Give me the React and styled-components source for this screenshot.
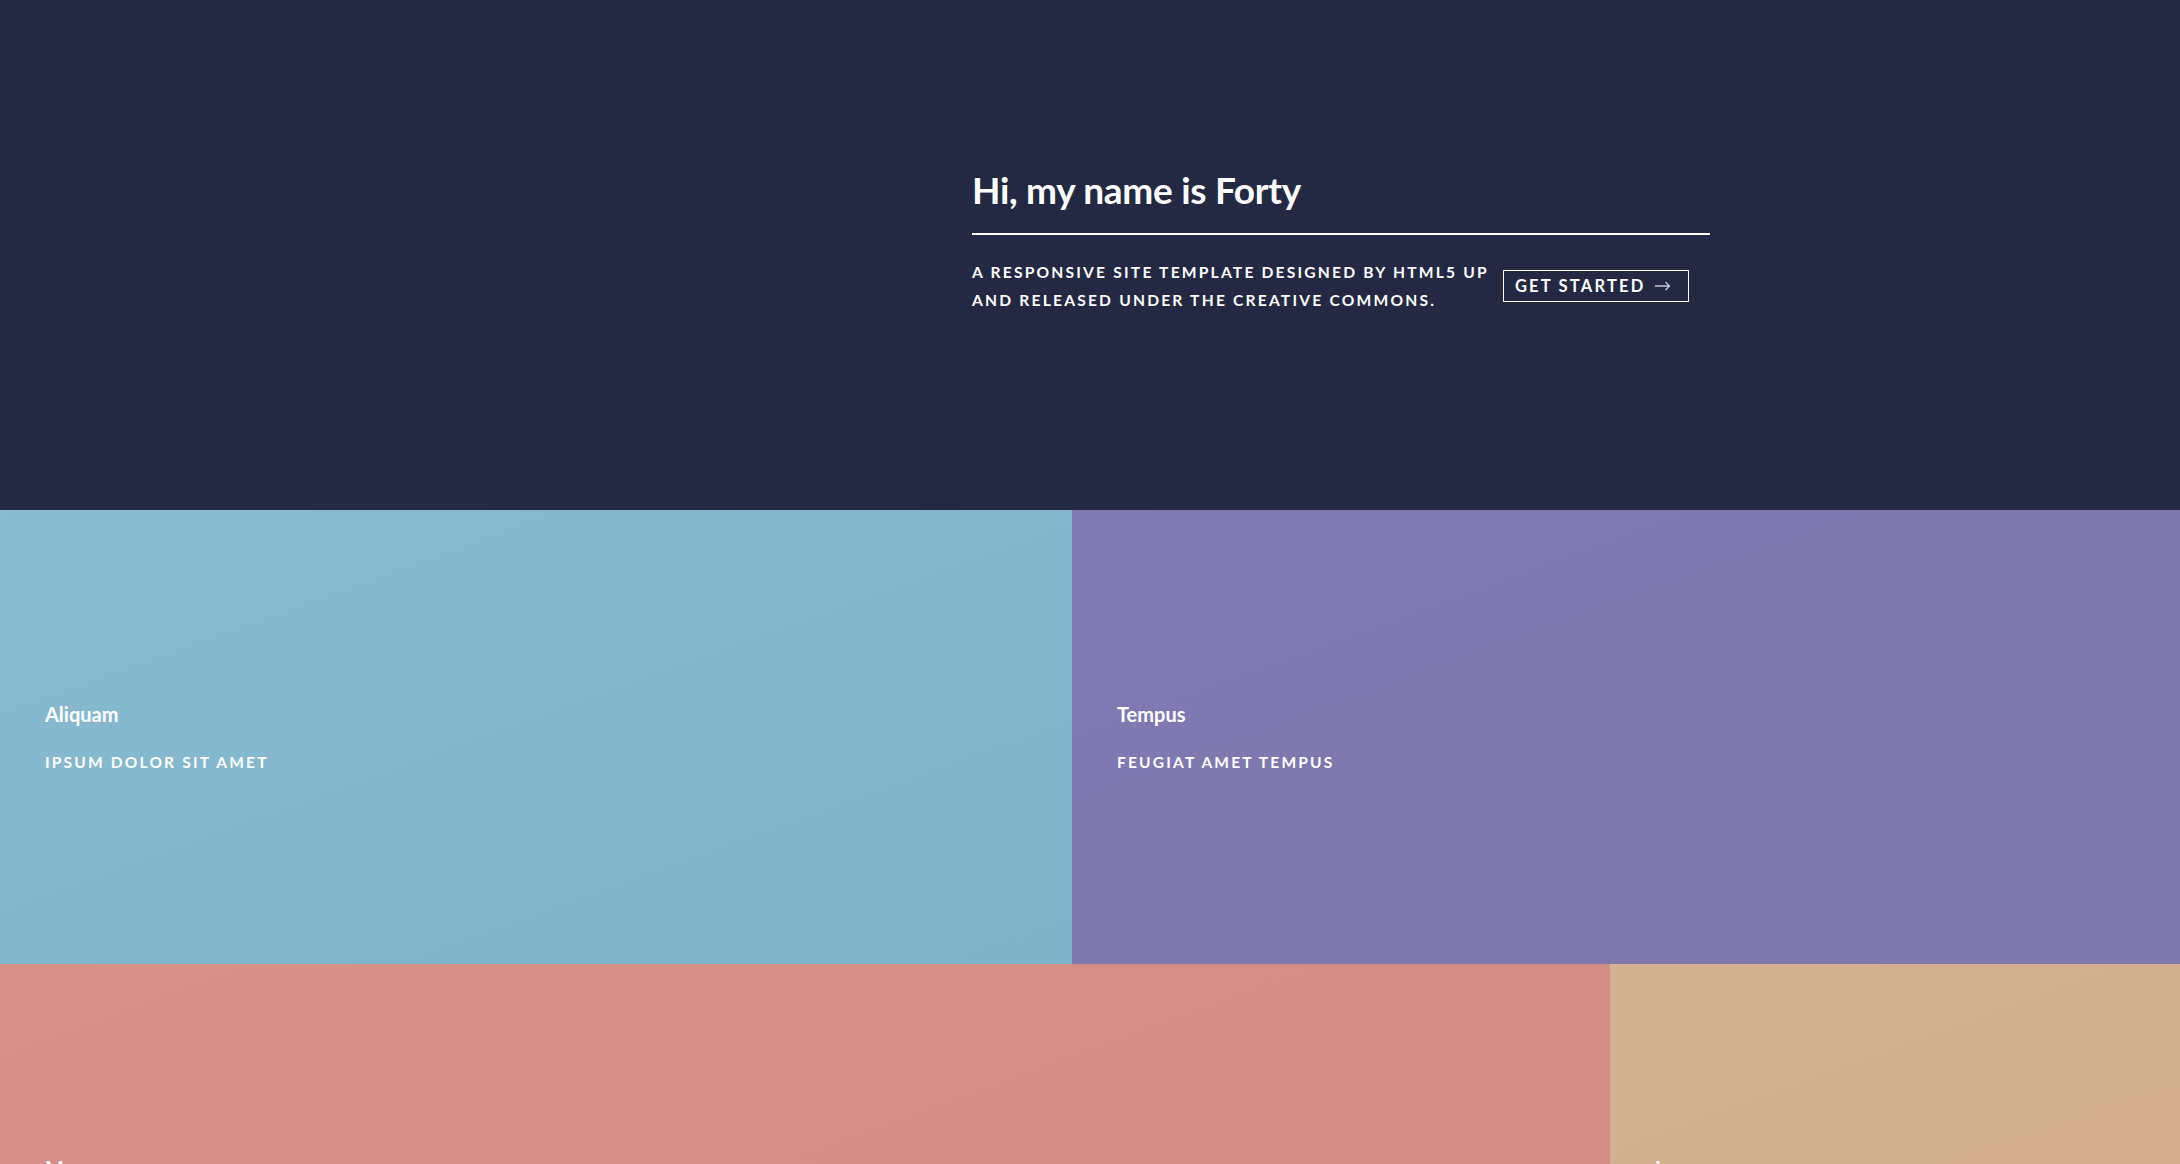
import React from 'react'
import styled, { createGlobalStyle } from 'styled-components'

const GlobalStyle = createGlobalStyle`
  html, body {
    margin: 0;
    padding: 0;
    background: #242943;
  }
  body {
    font-family: 'Source Sans Pro', Lato, 'Noto Sans', sans-serif;
    color: #ffffff;
    -webkit-font-smoothing: antialiased;
  }
  * {
    box-sizing: border-box;
  }
`

const tiles = [
  { title: 'Aliquam', sub: 'Ipsum dolor sit amet', width: '1072px', from: '#88bbd0', to: '#7fb3cb' },
  { title: 'Tempus', sub: 'Feugiat amet tempus', width: '1108px', from: '#8079b2', to: '#7e78ae' },
  { title: 'Magna', sub: 'Lorem etiam nullam', width: '1610px', from: '#d79189', to: '#d28c83' },
  { title: 'Ipsum', sub: 'Nisl sed aliquam', width: '570px', from: '#d5b292', to: '#d1ac8b' }
]

export default function App() {
  return (
    <>
      <GlobalStyle />
      <Page>
        <Banner>
          <Inner>
            <Header>
              <Title>Hi, my name is Forty</Title>
            </Header>
            <Content>
              <Lead>
                <span>A responsive site template designed by HTML5 UP</span>
                <span>and released under the Creative Commons.</span>
              </Lead>
              <Button href='#one'>
                Get Started
                <ArrowIcon width='16' height='10' viewBox='0 0 16 10'>
                  <path d='M0 5h14.5M10.5 1l4 4-4 4' />
                </ArrowIcon>
              </Button>
            </Content>
          </Inner>
        </Banner>
        <Tiles>
          {tiles.map(tile => (
            <Tile key={tile.title} width={tile.width} from={tile.from} to={tile.to}>
              <TileTitle>{tile.title}</TileTitle>
              <TileSub>{tile.sub}</TileSub>
            </Tile>
          ))}
        </Tiles>
      </Page>
    </>
  )
}

const Page = styled.div`
  width: 2180px;
  height: 1164px;
  overflow: hidden;
`

const Banner = styled.section`
  height: 510px;
  background: #242943;
  padding: 168px 0 0 972px;
`

const Inner = styled.div`
  width: 738px;
`

const Header = styled.header`
  border-bottom: 2px solid #ffffff;
  padding-bottom: 21px;
  margin-bottom: 23px;
`

const Title = styled.h1`
  margin: 0;
  font-size: 37px;
  font-weight: 700;
  line-height: 1.2;
  letter-spacing: -0.3px;
`

const Content = styled.div`
  display: flex;
  align-items: center;
`

const Lead = styled.p`
  display: flex;
  flex-direction: column;
  margin: 0 14px 0 0;
  font-size: 15.6px;
  font-weight: 700;
  line-height: 28px;
  letter-spacing: 2.2px;
  text-transform: uppercase;
  white-space: nowrap;
`

const Button = styled.a`
  display: inline-flex;
  align-items: center;
  gap: 10px;
  height: 32px;
  padding: 0 17px 0 11px;
  border: 1px solid #ffffff;
  color: #ffffff;
  text-decoration: none;
  font-size: 16.5px;
  font-weight: 700;
  letter-spacing: 2.2px;
  text-transform: uppercase;
  white-space: nowrap;
`

const ArrowIcon = styled.svg`
  fill: none;
  stroke: #c8c9d0;
  stroke-width: 1.3;
  flex-shrink: 0;
`

const Tiles = styled.section`
  display: flex;
  flex-wrap: wrap;
`

const Tile = styled.article`
  width: ${({ width }) => width};
  height: 454px;
  padding: 0 45px;
  display: flex;
  flex-direction: column;
  justify-content: center;
  background: linear-gradient(160deg, ${({ from }) => from}, ${({ to }) => to});
`

const TileTitle = styled.h2`
  margin: 0 0 25px;
  font-size: 20px;
  font-weight: 700;
  line-height: 1.3;
`

const TileSub = styled.p`
  margin: 0;
  font-size: 15.5px;
  font-weight: 700;
  line-height: 1.3;
  letter-spacing: 2.2px;
  text-transform: uppercase;
`
